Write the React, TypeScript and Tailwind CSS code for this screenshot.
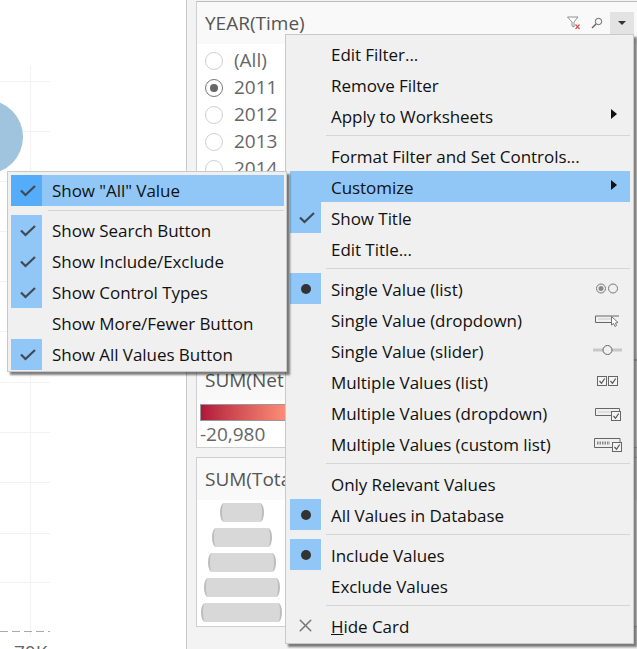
import React from 'react';
import { X } from 'lucide-react';

type Mark = 'check' | 'dot' | 'x' | null;

interface MenuRow {
  label: React.ReactNode;
  mark?: Mark;
  active?: boolean;
  arrow?: boolean;
  icon?: React.ReactNode;
}

const Check = () => (
  <svg width="16" height="12" viewBox="0 0 16 12" fill="none" className="ml-[2px]">
    <path d="M1 5.5 L5.5 10 L15 1" stroke="#3f4a55" strokeWidth="2.2" />
  </svg>
);

const Arrow = () => (
  <svg width="6" height="10" viewBox="0 0 6 10">
    <path d="M0 0 L6 5 L0 10 Z" fill="#111" />
  </svg>
);

const MarkBox = ({ row }: { row: MenuRow }) => {
  if (row.mark === 'x') {
    return (
      <div className="w-[31px] h-[31px] shrink-0 flex items-center justify-center">
        <X size={21} strokeWidth={1.7} color="#777" />
      </div>
    );
  }
  if (!row.mark) return <div className="w-[31px] h-[31px] shrink-0" />;
  return (
    <div className={`w-[31px] h-[31px] shrink-0 flex items-center justify-center ${row.active ? 'bg-[#55adf9]' : 'bg-[#90c7f6]'}`}>
      {row.mark === 'check' ? <Check /> : <div className="w-[10px] h-[10px] rounded-full bg-[#333]" />}
    </div>
  );
};

const Row = ({ row, sub }: { row: MenuRow; sub?: boolean }) => (
  <div className={`h-[31px] flex items-center ${row.active ? 'bg-[#90c7f6]' : ''}`}>
    <MarkBox row={row} />
    <span className={`ml-[10px] text-[17px] tracking-[-0.05px] text-[#111] whitespace-nowrap ${sub ? 'mt-[1px]' : 'mt-[2px]'}`}>{row.label}</span>
    <span className="ml-auto flex items-center">
      {row.icon}
      {row.arrow && <span className="flex mr-[13px] -mt-[3px]"><Arrow /></span>}
    </span>
  </div>
);

const Sep = ({ inset }: { inset: 'main' | 'sub' }) => (
  <div className={`h-[9px] flex items-center ${inset === 'main' ? 'pl-[36px]' : 'pl-[37px]'}`}>
    <div className="h-px w-full bg-[#d5d5d5]" />
  </div>
);

// all menu glyphs share one 32x18 box so they line up in the right hand column
const Glyph = ({ children }: { children: React.ReactNode }) => (
  <svg width="32" height="18" viewBox="0 0 32 18" fill="none" className="mr-[6px]">
    {children}
  </svg>
);

const Tick = ({ x, y }: { x: number; y: number }) => (
  <g>
    <rect x={x} y={y} width="9" height="9" fill="#f4f4f4" stroke="#666" />
    <path d={`M${x + 2} ${y + 4.5} L${x + 4} ${y + 6.8} L${x + 7.2} ${y + 2}`} stroke="#555" strokeWidth="1.2" />
  </g>
);

const RadioPair = () => (
  <Glyph>
    <circle cx="9" cy="8.5" r="4.5" stroke="#777" />
    <circle cx="9" cy="8.5" r="2.5" fill="#888" />
    <circle cx="21" cy="8.5" r="4.5" stroke="#777" />
  </Glyph>
);

const DropIcon = () => (
  <Glyph>
    <path d="M27 5 H3.5 V11.5 H20" stroke="#666" />
    <path d="M6 8 H19" stroke="#ccc" />
    <path d="M19.5 5.5 V14 L21.5 12.5 L23 15.5 L24.5 14.5 L23.5 12 L26 11.5 Z" fill="#fff" stroke="#666" strokeWidth="0.9" />
  </Glyph>
);

const SliderIcon = () => (
  <Glyph>
    <rect x="1" y="6.5" width="29" height="3" fill="#c8c8c8" />
    <circle cx="15.5" cy="8" r="4.5" fill="#f0f0f0" stroke="#666" />
  </Glyph>
);

const CheckPair = () => (
  <Glyph>
    <Tick x={5.5} y={3.5} />
    <Tick x={16.5} y={3.5} />
  </Glyph>
);

const DropCheck = () => (
  <Glyph>
    <path d="M27.5 7 V4.5 H3.5 V11.5 H19" stroke="#666" />
    <path d="M6 8 H24" stroke="#ccc" />
    <Tick x={19.5} y={7.5} />
  </Glyph>
);

const CustomList = () => (
  <Glyph>
    <path d="M28 7 V3.5 H2.5 V12.5 H20" stroke="#666" />
    <path d="M5 8 H18" stroke="#888" strokeDasharray="1.5 1" strokeWidth="3" />
    <Tick x={20.5} y={7.5} />
  </Glyph>
);

const filterMenu: (MenuRow | 'sep')[] = [
  { label: 'Edit Filter...' },
  { label: 'Remove Filter' },
  { label: 'Apply to Worksheets', arrow: true },
  'sep',
  { label: 'Format Filter and Set Controls...' },
  { label: 'Customize', arrow: true, active: true },
  { label: 'Show Title', mark: 'check' },
  { label: 'Edit Title...' },
  'sep',
  { label: 'Single Value (list)', mark: 'dot', icon: <RadioPair /> },
  { label: 'Single Value (dropdown)', icon: <DropIcon /> },
  { label: 'Single Value (slider)', icon: <SliderIcon /> },
  { label: 'Multiple Values (list)', icon: <CheckPair /> },
  { label: 'Multiple Values (dropdown)', icon: <DropCheck /> },
  { label: 'Multiple Values (custom list)', icon: <CustomList /> },
  'sep',
  { label: 'Only Relevant Values' },
  { label: 'All Values in Database', mark: 'dot' },
  'sep',
  { label: 'Include Values', mark: 'dot' },
  { label: 'Exclude Values' },
  'sep',
  { label: <><span className="underline">H</span>ide Card</>, mark: 'x' },
];

const customizeMenu: (MenuRow | 'sep')[] = [
  { label: 'Show "All" Value', mark: 'check', active: true },
  'sep',
  { label: 'Show Search Button', mark: 'check' },
  { label: 'Show Include/Exclude', mark: 'check' },
  { label: 'Show Control Types', mark: 'check' },
  { label: 'Show More/Fewer Button' },
  { label: 'Show All Values Button', mark: 'check' },
];

const years = [
  { label: '(All)', on: false },
  { label: '2011', on: true },
  { label: '2012', on: false },
  { label: '2013', on: false },
  { label: '2014', on: false },
];

const pillWidths = [44, 60, 68, 76, 81];

const Radio = ({ on }: { on: boolean }) => (
  <span className={`w-[18px] h-[18px] rounded-full border bg-white flex items-center justify-center ${on ? 'border-[#777]' : 'border-[#d0d0d0]'}`}>
    {on && <span className="w-[8px] h-[8px] rounded-full bg-[#666]" />}
  </span>
);

const ChartArea = () => (
  <div className="w-[186px] shrink-0 bg-white relative overflow-hidden">
    <svg width="186" height="649" className="block">
      {[81, 131, 181, 231, 281, 331, 382, 432, 482, 533, 582].map((y) => (
        <rect key={y} x="0" y={y} width="50" height="1" fill="#f2f2f2" />
      ))}
      <rect x="30" y="66" width="1" height="570" fill="#f2f2f2" />
      <circle cx="-14" cy="137" r="37" fill="#a0c4de" />
      <path d="M0 631.5 H50" stroke="#aaa" strokeDasharray="8 4" />
    </svg>
    <span className="absolute left-[14px] top-[642px] text-[19px] text-[#666] leading-[20px]">70K</span>
  </div>
);

const App: React.FC = () => {
  return (
    <div className="relative w-[637px] h-[649px] overflow-hidden flex bg-[#f3f3f3] font-['Open_Sans','Noto_Sans',sans-serif]">
      <ChartArea />

      <div className="flex-1 border-l border-[#c8c8c8] pl-[9px] flex flex-col">
        {/* year filter card */}
        <div className="mt-px h-[359px] border border-[#cfcfcf] border-t-[#bbbbbb] border-r-0 bg-white">
          <div className="h-[42px] bg-[#f9f9f9] flex items-center pl-[8px] pr-[2px]">
            <span className="text-[19px] text-[#555]">YEAR(Time)</span>
            <span className="ml-auto flex items-center">
              <svg width="14" height="14" viewBox="0 0 14 14" fill="none" className="mr-[10px]">
                <path d="M0.5 1 H11 L7 6 V11 L5 10 V6 Z" fill="#fff" stroke="#777" strokeWidth="0.8" />
                <path d="M8.5 8.5 L12.5 13 M12.5 8.5 L8.5 13" stroke="#d9534f" strokeWidth="1.2" />
              </svg>
              <svg width="12" height="12" viewBox="0 0 12 12" fill="none" className="mr-[7px]">
                <circle cx="7.5" cy="4.5" r="3.2" stroke="#666" />
                <path d="M5 7 L1 11" stroke="#666" strokeWidth="1.4" />
              </svg>
              <span className="w-[24px] h-[23px] mr-[1px] bg-[#e3e3e3] flex items-center justify-center">
                <span className="w-0 h-0 border-x-[4px] border-x-transparent border-t-[4px] border-t-[#333]" />
              </span>
            </span>
          </div>
          <div className="pl-[8px] pt-[3px]">
            {years.map((y) => (
              <div key={y.label} className="h-[27px] flex items-center gap-[11px]">
                <Radio on={y.on} />
                <span className="text-[19px] text-[#666]">{y.label}</span>
              </div>
            ))}
          </div>
        </div>

        {/* net sales legend */}
        <div className="h-[88px] border border-[#cfcfcf] border-r-0 bg-white">
          <div className="h-[39px] bg-[#f9f9f9] flex items-center pl-[8px]">
            <span className="text-[19px] text-[#555] whitespace-nowrap">SUM(Net Sales)</span>
          </div>
          <div className="pl-[3px] pt-[4px]">
            <div className="h-[17px] w-[88px] border border-[#999] bg-gradient-to-r from-[#b0143c] to-[#ff8f78]" />
            <div className="text-[19px] text-[#666] leading-[24px] mt-px">-20,980</div>
          </div>
        </div>

        {/* total legend */}
        <div className="mt-[9px] h-[170px] border border-[#cfcfcf] border-r-0 bg-white">
          <div className="h-[42px] bg-[#f9f9f9] flex items-center pl-[8px]">
            <span className="text-[19px] text-[#555] whitespace-nowrap">SUM(Total)</span>
          </div>
          <div className="flex flex-col items-start pl-[4px] pt-[3px] gap-[6px]">
            {pillWidths.map((w) => (
              <div key={w} className="h-[19px] flex justify-center w-[81px]">
                <div style={{ width: w }} className="h-[19px] bg-[#d8d8d8] border-x-2 border-[#bdbdbd] rounded-[4px/50%]" />
              </div>
            ))}
          </div>
        </div>
      </div>

      {/* filter menu */}
      <div className="absolute left-[285px] top-[34px] w-[349px] h-[610px] bg-[#f0f0f0] border border-[#c9c9c9] shadow-[3px_3px_2px_rgba(0,0,0,0.5)] pt-[3px] pl-[4px] pr-[3px]">
        {filterMenu.map((row, i) => (row === 'sep' ? <Sep key={i} inset="main" /> : <Row key={i} row={row} />))}
      </div>

      {/* customize submenu */}
      <div className="absolute left-[7px] top-[171px] w-[280px] h-[201px] bg-[#f0f0f0] border border-[#c9c9c9] shadow-[3px_3px_2px_rgba(0,0,0,0.5)] pt-[3px] pl-[3px] pr-[2px]">
        {customizeMenu.map((row, i) => (row === 'sep' ? <Sep key={i} inset="sub" /> : <Row key={i} row={row} sub />))}
      </div>
    </div>
  );
};

export default App;
